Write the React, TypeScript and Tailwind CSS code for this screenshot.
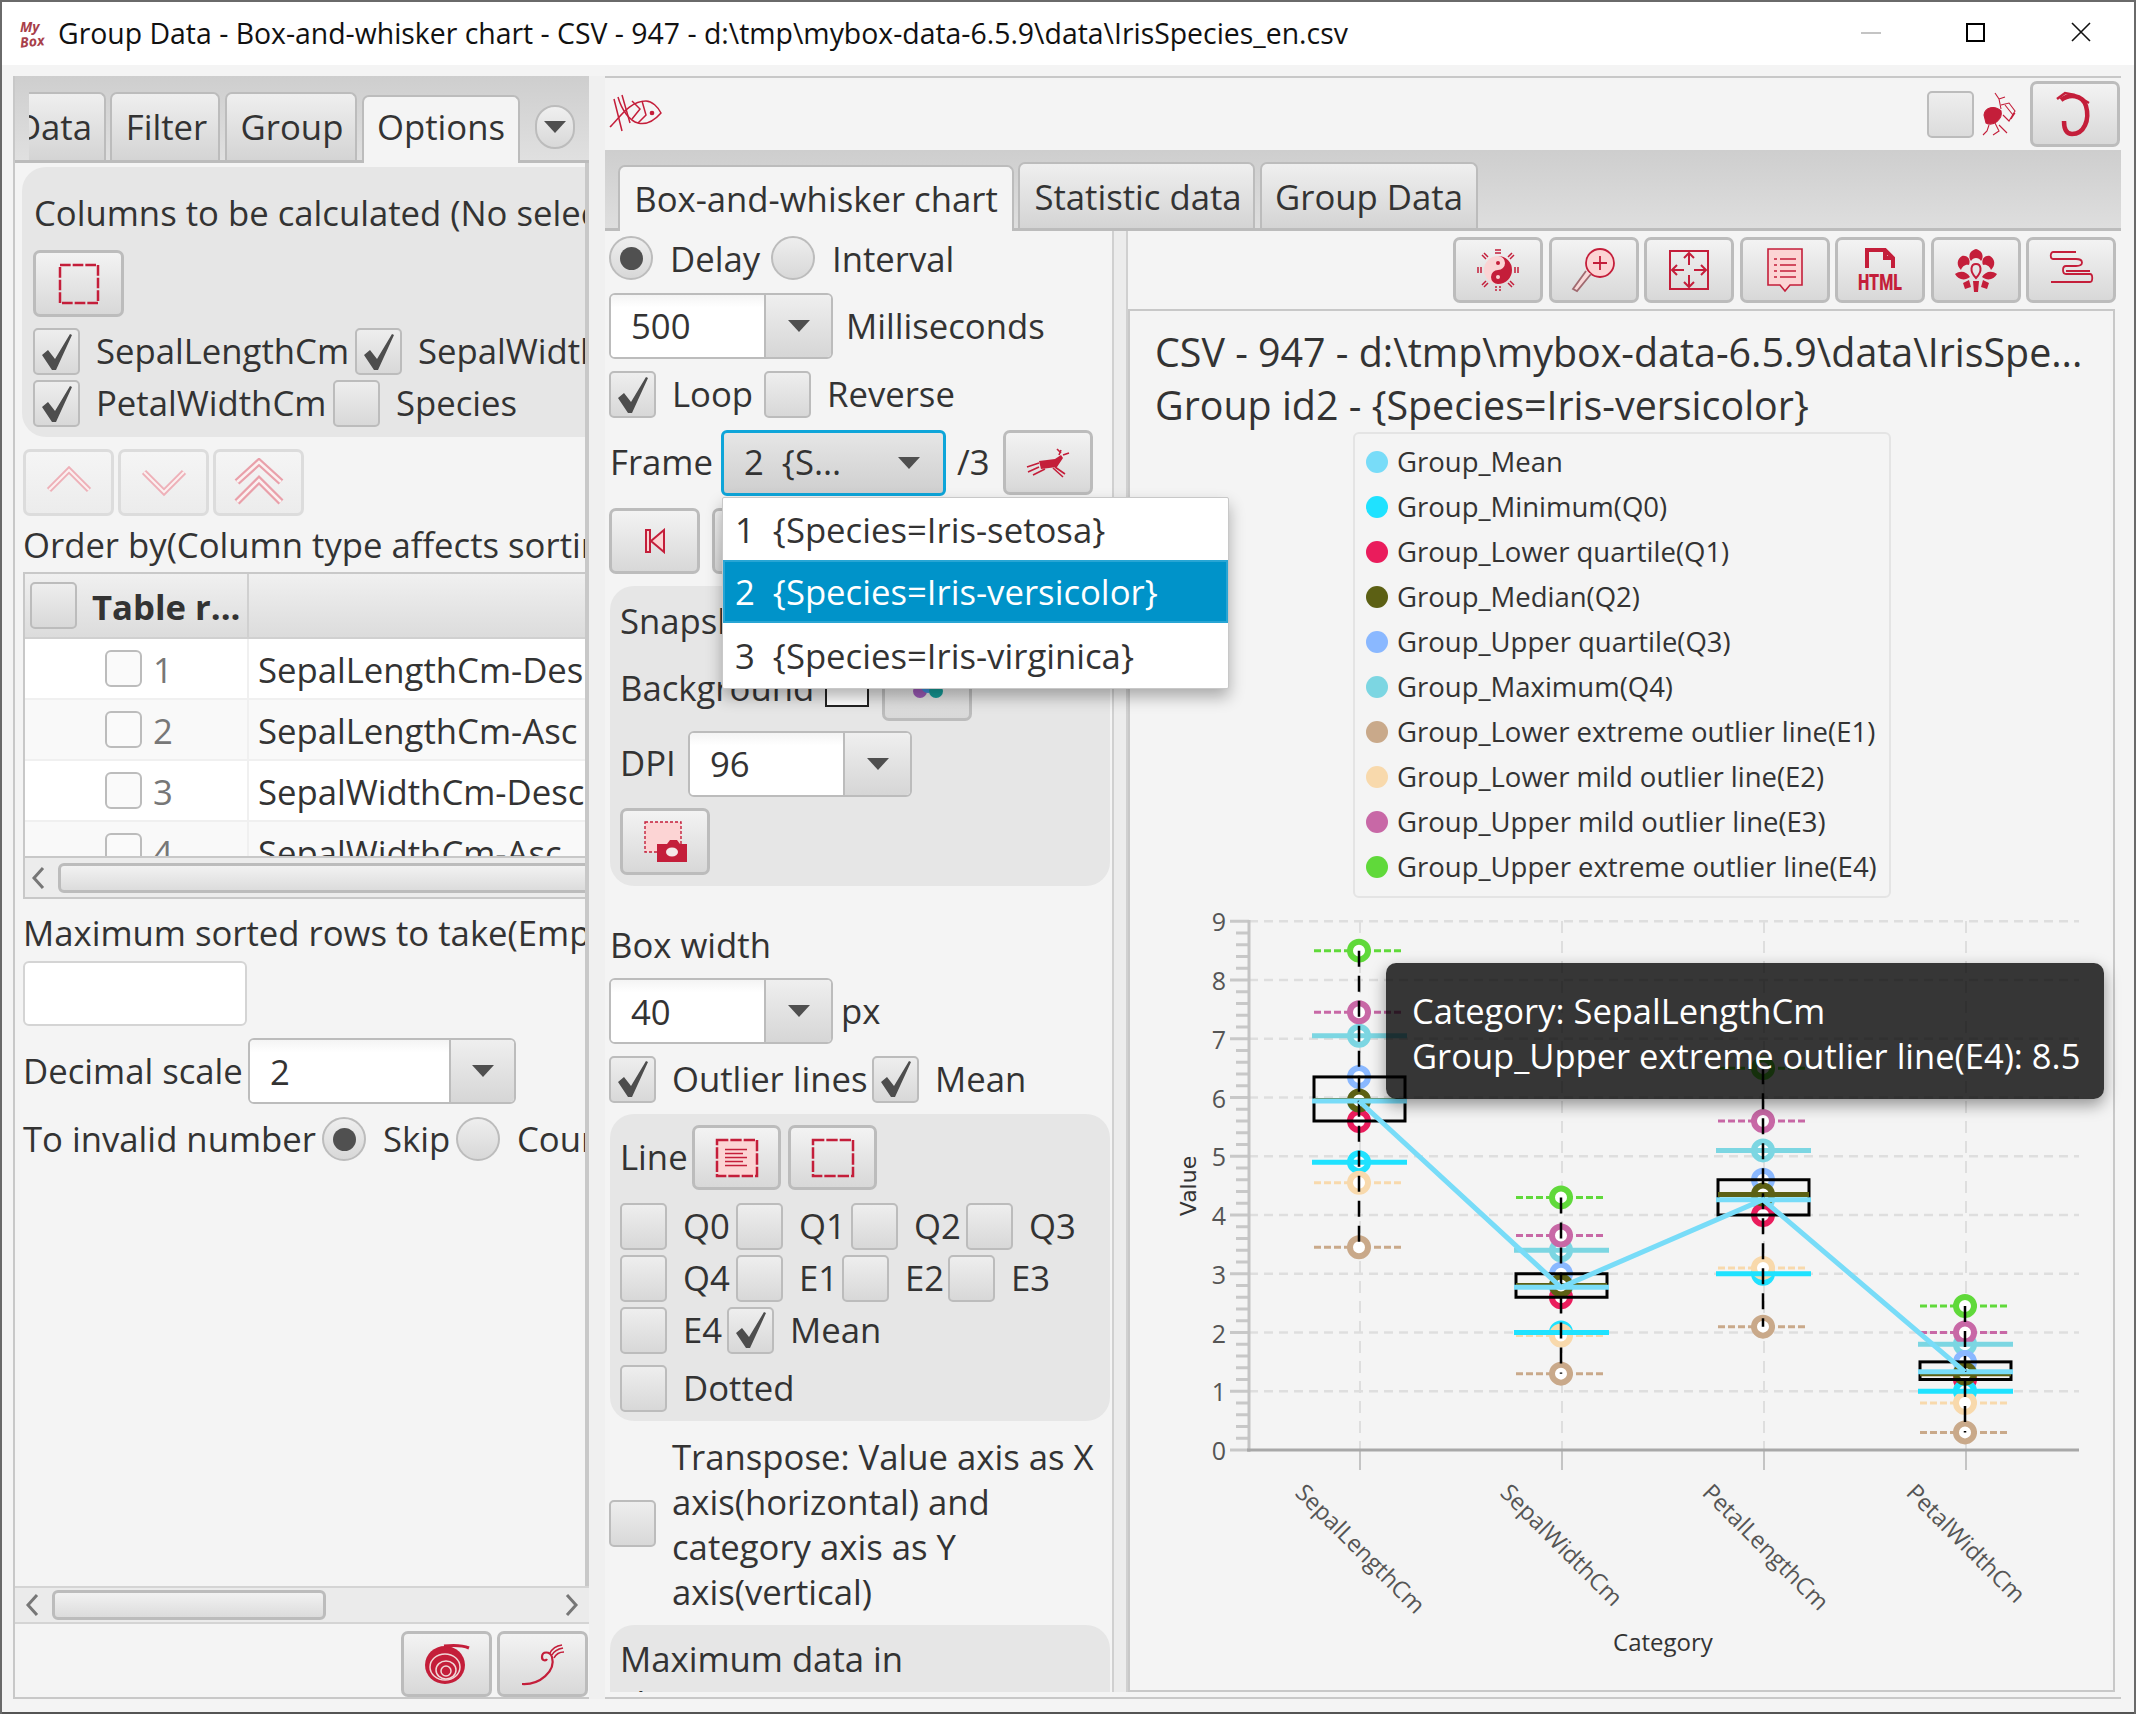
import React from 'react';

const RED = '#c41e3a';
const PINK = '#fcd4d4';

const DashedRect = ({ w = 38, h = 38, fill = 'none', lines = false }: { w?: number; h?: number; fill?: string; lines?: boolean }) => (
    <svg width={w + 4} height={h + 4} viewBox={`0 0 ${w + 4} ${h + 4}`}>
        <rect x="2" y="2" width={w} height={h} fill={fill} stroke={RED} strokeWidth="2.5" strokeDasharray={`${w / 3 - 2} 2`} />
        {lines && [0, 1, 2, 3, 4].map(i => (
            <line key={i} x1={w * 0.25} x2={i % 2 ? w * 0.7 : w * 0.8} y1={h * 0.32 + i * 4} y2={h * 0.32 + i * 4} stroke={RED} strokeWidth="1.5" />
        ))}
    </svg>
);

const Chevrons = ({ kind }: { kind: 'up' | 'down' | 'top' }) => (
    <svg width="50" height="50" viewBox="0 0 50 50" fill="none" strokeLinejoin="miter">
        {kind === 'up' && <><polyline points="5,32 25,12 45,32" stroke="#eeb0b8" strokeWidth="6" /><polyline points="5,32 25,12 45,32" stroke="#fbf0f0" strokeWidth="2" /></>}
        {kind === 'down' && <><polyline points="5,14 25,34 45,14" stroke="#eeb0b8" strokeWidth="6" /><polyline points="5,14 25,34 45,14" stroke="#fbf0f0" strokeWidth="2" /></>}
        {kind === 'top' && <>
            <polyline points="3,24 25,4 47,24" stroke="#e9a0aa" strokeWidth="7" /><polyline points="3,24 25,4 47,24" stroke="#fbf0f0" strokeWidth="2.5" />
            <polyline points="3,44 25,22 47,44" stroke="#e9a0aa" strokeWidth="7" /><polyline points="3,44 25,22 47,44" stroke="#fbf0f0" strokeWidth="2.5" />
        </>}
    </svg>
);

const Fish = () => (
    <svg width="54" height="42" viewBox="0 0 54 42" fill="none" stroke={RED} strokeWidth="1.5">
        <path d="M2 34 C12 24 22 8 38 8 C44 8 50 14 53 20 C46 28 38 32 30 30 C22 28 14 18 10 4" />
        <path d="M6 6 L14 38 M14 2 L22 30 M24 8 L32 16 L24 26 M34 8 L38 22 L30 30" />
        <circle cx="44" cy="20" r="1.6" fill={RED} />
    </svg>
);

const Deer = () => (
    <svg width="46" height="32" viewBox="0 0 46 32" fill="none" stroke={RED}>
        <path d="M14 14 L30 12 L36 8 L38 11 L32 20 L16 22 Z" fill={RED} stroke="none" />
        <path d="M34 8 L36 3 M38 8 L44 6 M36 6 L32 2 M14 16 L2 20 M14 20 L3 25 M20 22 L8 28 M30 20 L40 27 M28 21 L38 30" strokeWidth="1.6" />
    </svg>
);

const Bird = () => (
    <svg width="38" height="46" viewBox="0 0 38 46" fill="none" stroke={RED} strokeWidth="1.1">
        <path d="M5 24 C6 16 16 14 22 20 C24 28 14 36 7 32 Z" fill={RED} />
        <path d="M16 2 L20 8 L22 18 M20 8 L26 6 M22 14 L30 12 L36 20 L30 30 L24 24 M36 22 L32 28 M26 14 L34 24 M10 34 L8 40 L4 44 M16 32 L20 40 L14 44 M20 34 L28 42" />
    </svg>
);

const Dragon = () => (
    <svg width="40" height="46" viewBox="0 0 40 46" fill="none" stroke={RED} strokeWidth="4.5">
        <path d="M6 9 C14 3 27 3 31 15 C35 29 29 43 17 43 C11 43 9 38 9 30" />
        <path d="M2 8 L10 2 L20 4 M24 6 L34 12" strokeWidth="2.5" />
    </svg>
);

const Snail = () => (
    <svg width="46" height="42" viewBox="0 0 46 42">
        <ellipse cx="21" cy="22" rx="20" ry="19" fill={RED} />
        <path d="M20 3 C30 2 38 2 45 5" fill="none" stroke={RED} strokeWidth="3" />
        <g fill="none" stroke="#f0d8d8" strokeWidth="1.5">
            <ellipse cx="21" cy="24" rx="15" ry="13" />
            <ellipse cx="22" cy="27" rx="10" ry="9" />
            <ellipse cx="22" cy="28" rx="5" ry="5" />
        </g>
    </svg>
);

const Sprout = () => (
    <svg width="46" height="46" viewBox="0 0 46 46" fill="none" stroke={RED}>
        <path d="M2 43 C20 44 36 30 32 16 C30 10 22 10 22 16 C22 20 26 20 27 18" strokeWidth="2.2" />
        <path d="M30 12 C32 8 36 5 42 4 M32 14 C34 10 38 8 43 7 M34 17 C36 13 40 11 44 11" strokeWidth="1.6" />
    </svg>
);

const Taiji = () => (
    <svg width="46" height="46" viewBox="0 0 46 46">
        <circle cx="23" cy="23" r="14" fill="#fad4d4" />
        <path d="M23 9 A14 14 0 0 1 23 37 A7 7 0 0 1 23 23 A7 7 0 0 0 23 9 Z" fill={RED} />
        <circle cx="23" cy="16" r="2" fill={RED} />
        <circle cx="23" cy="30" r="2" fill="#fad4d4" />
        <g stroke={RED} strokeWidth="1.5">
            <path d="M20 3 H26 M20 6 H26 M20 40 H22 M24 40 H26 M20 43 H22 M24 43 H26 M3 20 V26 M6 20 V26 M40 20 V26 M43 20 V26 M7 8 L11 12 M9 6 L13 10 M35 12 L39 8 M33 10 L37 6 M7 38 L11 34 M9 40 L13 36 M35 34 L39 38 M33 36 L37 40" />
        </g>
    </svg>
);

const Magnifier = () => (
    <svg width="46" height="46" viewBox="0 0 46 46" fill="none" stroke={RED} strokeWidth="1.8">
        <circle cx="29" cy="16" r="14" fill={PINK} />
        <path d="M29 9 V23 M22 16 H36" />
        <path d="M20 27 L6 44 L2 42 L15 24" fill="#f8d8d8" stroke="#a06a70" />
    </svg>
);

const MoveBox = () => (
    <svg width="42" height="42" viewBox="0 0 42 42" fill="none" stroke={RED} strokeWidth="2">
        <rect x="2" y="2" width="38" height="38" />
        <path d="M21 4 V16 M16 9 L21 4 L26 9 M21 26 V38 M16 33 L21 38 L26 33 M4 21 H16 M9 16 L4 21 L9 26 M26 21 H38 M33 16 L38 21 L33 26" />
    </svg>
);

const NoteIcon = () => (
    <svg width="38" height="46" viewBox="0 0 38 46" fill={PINK} stroke={RED} strokeWidth="1.6">
        <path d="M2 2 H36 V38 H24 L19 44 L14 38 H2 Z" />
        <path d="M14 12 H30 M14 18 H30 M14 24 H30 M14 30 H30 M8 12 H11 M8 18 H11 M8 24 H11 M8 30 H11" />
    </svg>
);

const HtmlIcon = () => (
    <svg width="46" height="46" viewBox="0 0 46 46">
        <path d="M10 21 V3 H28 L36 11 V21 M28 3 V11 H36" fill="none" stroke={RED} strokeWidth="4" />
        <text x="23" y="43" textAnchor="middle" fontFamily="Roboto, sans-serif" fontWeight="900" fontSize="22" fill={RED} textLength="44" lengthAdjust="spacingAndGlyphs">HTML</text>
    </svg>
);

const Flower = () => (
    <svg width="46" height="46" viewBox="0 0 46 46" fill={RED}>
        <path d="M23 2 C30 4 31 10 28 14 C26 10 20 10 18 14 C15 10 16 4 23 2 Z" />
        <path d="M9 9 C15 8 18 13 16 18 C12 17 9 20 8 23 C3 18 4 12 9 9 Z M37 9 C31 8 28 13 30 18 C34 17 37 20 38 23 C43 18 42 12 37 9 Z" />
        <path d="M2 27 C8 23 14 25 17 30 C12 34 5 33 2 27 Z M44 27 C38 23 32 25 29 30 C34 34 41 33 44 27 Z" />
        <path d="M23 17 C28 17 30 24 23 31 C16 24 18 17 23 17 Z" fill="none" stroke={RED} strokeWidth="2" />
        <path d="M10 36 L16 33 L18 40 L12 42 Z M36 36 L30 33 L28 40 L34 42 Z M20 34 H26 L25 45 H21 Z" />
    </svg>
);

const ScrollIcon = () => (
    <svg width="46" height="40" viewBox="0 0 46 40" fill="none" stroke={RED} strokeWidth="1.8">
        <path d="M5 2 H28 M5 2 C2 2 2 9 5 9 H28 C36 9 36 16 28 16 H18 M18 16 C14 16 14 24 18 24 H42 C45 24 45 32 42 32 M3 32 H42 M18 21 H42" />
    </svg>
);

const FirstIcon = () => (
    <svg width="22" height="26" viewBox="0 0 22 26" fill={PINK} stroke={RED} strokeWidth="2">
        <path d="M2 2 H6 V24 H2 Z M20 2 V24 L7 13 Z" />
    </svg>
);

const SnapIcon = () => (
    <svg width="44" height="44" viewBox="0 0 44 44">
        <rect x="2" y="2" width="36" height="30" fill={PINK} stroke={RED} strokeWidth="1.4" strokeDasharray="3 2" />
        <path d="M14 24 H24 L27 20 H34 L37 24 H44 V42 H14 Z" fill={RED} />
        <ellipse cx="29" cy="32" rx="6" ry="4.5" fill="#f4e8e8" />
    </svg>
);

const Palette = () => (
    <svg width="34" height="24" viewBox="0 0 34 24">
        <circle cx="10" cy="15" r="7" fill="#9b59b6" />
        <circle cx="18" cy="10" r="7" fill="#3b8fd8" />
        <circle cx="26" cy="15" r="7" fill="#149a96" />
    </svg>
);

const Arrow = () => (
    <svg width="24" height="14" viewBox="0 0 24 14"><path d="M1 1 H23 L12 13 Z" fill="#4f4f4f" /></svg>
);

const CheckMark = () => (
    <svg width="34" height="38" viewBox="0 0 34 38" className="block">
        <path d="M2 22 L8 17 L15 26 L30 1 L32 2 L16 37 L12 37 Z" fill="#4d4d4d" />
    </svg>
);

const Check = ({ on = false }: { on?: boolean }) => (
    <div className="flex h-[47px] w-[47px] shrink-0 items-center justify-center rounded-[5px] border-2 border-[#bcbcbc] bg-linear-to-b from-[#eeeeee] to-[#d8d8d8]">
        {on && <CheckMark />}
    </div>
);

const Radio = ({ on = false }: { on?: boolean }) => (
    <div className="flex h-[44px] w-[44px] shrink-0 items-center justify-center rounded-full border-2 border-[#bcbcbc] bg-linear-to-b from-[#eeeeee] to-[#d8d8d8]">
        {on && <div className="h-[23px] w-[23px] rounded-full bg-[#505050]" />}
    </div>
);

const Combo = ({ text, className = 'w-[224px]', inner = 'w-[155px]' }: { text: string; className?: string; inner?: string }) => (
    <div className={`flex h-[66px] shrink-0 overflow-hidden rounded-[6px] border-2 border-[#bcbcbc] bg-white ${className}`}>
        <div className={`flex items-center pl-[20px] pt-[2px] ${inner} border-r-2 border-[#bcbcbc] bg-linear-to-b from-[#f4f4f4] to-white to-[20%]`}>{text}</div>
        <div className="flex flex-1 items-center justify-center bg-linear-to-b from-[#efefef] to-[#d6d6d6]"><Arrow /></div>
    </div>
);

const Btn = ({ children, className = 'w-[91px] h-[66px]', off = false }: { children?: React.ReactNode; className?: string; off?: boolean }) => (
    <div className={`flex shrink-0 items-center justify-center rounded-[7px] border-[3px] ${off ? 'border-[#dcdcdc] from-[#f5f5f5] to-[#ececec]' : 'border-[#bcbcbc] from-[#f3f3f3] to-[#d8d8d8]'} bg-linear-to-b ${className}`}>
        {children}
    </div>
);

const Labeled = ({ label, on, className = '' }: { label: string; on?: boolean; className?: string }) => (
    <div className={`flex shrink-0 items-center ${className}`}>
        <Check on={on} />
        <span className="ml-[16px] whitespace-nowrap">{label}</span>
    </div>
);

const Tab = ({ label, active = false, className = '' }: { label: string; active?: boolean; className?: string }) => (
    <div className={`flex shrink-0 items-center justify-center whitespace-nowrap rounded-t-[7px] border-2 border-b-0 border-[#bcbcbc] ${active ? 'relative z-10 -mb-[3px] bg-[#f4f4f4]' : 'bg-linear-to-b from-[#efefef] to-[#d4d4d4]'} ${className}`}>
        {label}
    </div>
);

const ScrollArrow = ({ left = false }: { left?: boolean }) => (
    <svg width="14" height="24" viewBox="0 0 14 24" fill="none" stroke="#777" strokeWidth="3">
        <polyline points={left ? '12,2 3,12 12,22' : '2,2 11,12 2,22'} />
    </svg>
);

const TableRow = ({ n, text, odd }: { n: number; text: string; odd: boolean }) => (
    <div className={`flex h-[61px] shrink-0 border-b-2 border-[#f0f0f0] ${odd ? 'bg-white' : 'bg-[#f9f9f9]'}`}>
        <div className="flex w-[224px] shrink-0 items-center border-r-2 border-[#f0f0f0] pl-[80px] text-[#777]">
            <div className="h-[37px] w-[37px] rounded-[6px] border-2 border-[#bcbcbc] bg-[#fafafa]" />
            <span className="ml-[11px] pt-[3px]">{n}</span>
        </div>
        <div className="flex items-center whitespace-nowrap pl-[9px] pt-[3px]">{text}</div>
    </div>
);

const LeftPanel = () => (
    <div className="flex h-[1623px] w-[576px] shrink-0 flex-col border-b-2 border-l-2 border-[#c8c8c8]">
        <div className="relative flex h-[87px] shrink-0 items-end border-b-[3px] border-[#bcbcbc] bg-linear-to-b from-[#cecece] to-[#e0e0e0] pl-[14px]">
            <div className="flex h-[68px] w-[77px] shrink-0 items-center justify-end overflow-hidden rounded-tr-[7px] border-2 border-b-0 border-l-0 border-[#bcbcbc] bg-linear-to-b from-[#efefef] to-[#d4d4d4] pr-[12px]">Data</div>
            <Tab label="Filter" className="ml-[4px] h-[68px] w-[110px] pl-[3px]" />
            <Tab label="Group" className="ml-[5px] h-[68px] w-[132px] pl-[2px]" />
            <Tab label="Options" active className="ml-[5px] h-[68px] w-[158px] pb-[5px]" />
            <div className="ml-[15px] mb-[11px] flex h-[44px] w-[40px] items-center justify-center rounded-full border-2 border-[#bcbcbc] bg-linear-to-b from-[#f0f0f0] to-[#d8d8d8]"><Arrow /></div>
        </div>
        <div className="flex h-[1423px] shrink-0 flex-col overflow-hidden border-r-4 border-[#c8c8c8]">
            <div className="ml-[7px] mt-[4px] h-[270px] w-[700px] shrink-0 overflow-hidden rounded-[24px] bg-[#e6e6e6] pl-[11px] pt-[23px]">
                <div className="ml-[1px] h-[45px] whitespace-nowrap leading-[45px]">Columns to be calculated (No selection is same as all selected)</div>
                <Btn className="mt-[15px] h-[67px] w-[91px]"><DashedRect /></Btn>
                <div className="mt-[11px] flex h-[47px]">
                    <Labeled label="SepalLengthCm" on className="w-[322px]" />
                    <Labeled label="SepalWidthCm" on />
                </div>
                <div className="mt-[5px] flex h-[47px]">
                    <Labeled label="PetalWidthCm" on className="w-[300px]" />
                    <Labeled label="Species" />
                </div>
            </div>
            <div className="ml-[8px] mt-[12px] flex h-[67px] shrink-0 gap-[4px]">
                <Btn off className="h-[67px] w-[91px]"><Chevrons kind="up" /></Btn>
                <Btn off className="h-[67px] w-[91px]"><Chevrons kind="down" /></Btn>
                <Btn off className="h-[67px] w-[91px]"><Chevrons kind="top" /></Btn>
            </div>
            <div className="ml-[8px] mt-[6px] h-[45px] shrink-0 whitespace-nowrap leading-[45px]">Order by(Column type affects sorting results)</div>
            <div className="ml-[8px] mt-[5px] flex h-[327px] w-[700px] shrink-0 flex-col border-2 border-[#c8c8c8]">
                <div className="flex h-[65px] shrink-0 border-b-2 border-[#d0d0d0] bg-linear-to-b from-[#f0f0f0] to-[#dcdcdc]">
                    <div className="flex w-[224px] shrink-0 items-center border-r-2 border-[#d0d0d0] pl-[5px]">
                        <Check />
                        <span className="ml-[15px] whitespace-nowrap pt-[4px] font-bold">Table r...</span>
                    </div>
                </div>
                <div className="flex h-[217px] shrink-0 flex-col overflow-hidden">
                    <TableRow n={1} text="SepalLengthCm-Desc" odd />
                    <TableRow n={2} text="SepalLengthCm-Asc" odd={false} />
                    <TableRow n={3} text="SepalWidthCm-Desc" odd />
                    <TableRow n={4} text="SepalWidthCm-Asc" odd={false} />
                </div>
                <div className="flex h-[41px] shrink-0 items-center border-t-2 border-[#c8c8c8] bg-[#ececec] pl-[6px]">
                    <ScrollArrow left />
                    <div className="ml-[13px] h-[30px] flex-1 rounded-[6px] border-[3px] border-[#bcbcbc] bg-linear-to-b from-[#f2f2f2] to-[#dcdcdc]" />
                </div>
            </div>
            <div className="ml-[8px] mt-[11px] h-[45px] shrink-0 whitespace-nowrap leading-[45px]">Maximum sorted rows to take(Empty to take all)</div>
            <div className="ml-[8px] mt-[6px] h-[65px] w-[224px] shrink-0 rounded-[6px] border-2 border-[#d4d4d4] bg-white" />
            <div className="ml-[8px] mt-[12px] flex h-[66px] shrink-0 items-center">
                <span className="w-[225px] shrink-0 whitespace-nowrap">Decimal scale</span>
                <Combo text="2" className="w-[268px]" inner="w-[201px]" />
            </div>
            <div className="ml-[8px] mt-[13px] flex h-[44px] shrink-0 items-center whitespace-nowrap">
                <span className="w-[299px] shrink-0">To invalid number</span>
                <Radio on />
                <span className="ml-[17px] w-[73px] shrink-0">Skip</span>
                <Radio />
                <span className="ml-[17px]">Count as zero</span>
            </div>
        </div>
        <div className="flex h-[38px] shrink-0 items-center justify-between border-y-2 border-[#d4d4d4] bg-[#ebebeb] px-[10px]">
            <ScrollArrow left />
            <div className="ml-[13px] mr-auto h-[30px] w-[274px] rounded-[6px] border-[3px] border-[#bcbcbc] bg-linear-to-b from-[#f2f2f2] to-[#dcdcdc]" />
            <ScrollArrow />
        </div>
        <div className="flex flex-1 items-start justify-end gap-[5px] pr-[1px] pt-[7px]">
            <Btn><Snail /></Btn>
            <Btn><Sprout /></Btn>
        </div>
    </div>
);

const Middle = () => (
    <div className="h-[1461px] w-[507px] shrink-0 overflow-hidden pl-[4px]">
        <div className="mt-[5px] flex h-[44px] items-center">
            <Radio on />
            <span className="ml-[17px] w-[101px] shrink-0 pt-[2px]">Delay</span>
            <Radio />
            <span className="ml-[17px] pt-[2px]">Interval</span>
        </div>
        <div className="mt-[12px] flex h-[67px] items-center">
            <Combo text="500" />
            <span className="ml-[13px] pt-[2px]">Milliseconds</span>
        </div>
        <div className="mt-[12px] flex h-[47px]">
            <Labeled label="Loop" on className="w-[155px]" />
            <Labeled label="Reverse" />
        </div>
        <div className="mt-[12px] flex h-[65px] items-center">
            <span className="ml-[1px] w-[111px] shrink-0">Frame</span>
            <div className="flex h-[66px] w-[225px] shrink-0 items-center rounded-[6px] border-[3px] border-[#0ea5d9] bg-linear-to-b from-[#e6e6e6] to-[#cfcfcf] pl-[20px] pr-[22px]">
                <span className="whitespace-pre">2  {'{'}S...</span>
                <span className="ml-auto"><Arrow /></span>
            </div>
            <span className="ml-[11px] w-[46px] shrink-0">/3</span>
            <Btn className="h-[65px] w-[90px]"><Deer /></Btn>
        </div>
        <div className="mt-[13px] flex h-[66px] gap-[12px]">
            <Btn><FirstIcon /></Btn>
            <Btn />
        </div>
        <div className="ml-[1px] mt-[12px] h-[300px] w-[500px] rounded-[24px] bg-[#e6e6e6] pl-[10px]">
            <div className="pt-[12px]"><div className="h-[45px] leading-[45px]">Snapshot</div></div>
            <div className="mt-[22px] flex h-[45px] items-center">
                <span className="w-[205px] shrink-0 leading-[45px]">Background</span>
                <div className="h-[38px] w-[44px] shrink-0 border-2 border-[#222] bg-white" />
                <Btn className="ml-[13px] h-[66px] w-[90px]"><Palette /></Btn>
            </div>
            <div className="mt-[20px] flex h-[67px] items-center">
                <span className="w-[68px] shrink-0">DPI</span>
                <Combo text="96" />
            </div>
            <Btn className="mt-[11px] h-[67px] w-[90px]"><SnapIcon /></Btn>
        </div>
        <div className="ml-[1px] mt-[36px] h-[45px] leading-[45px]">Box width</div>
        <div className="mt-[11px] flex h-[66px] items-center">
            <Combo text="40" />
            <span className="ml-[8px]">px</span>
        </div>
        <div className="mt-[12px] flex h-[46px]">
            <Labeled label="Outlier lines" on className="w-[263px]" />
            <Labeled label="Mean" on />
        </div>
        <div className="ml-[1px] mt-[12px] h-[307px] w-[500px] rounded-[24px] bg-[#e6e6e6] pl-[10px]">
            <div className="pt-[11px]">
                <div className="flex h-[65px] items-center gap-[7px]">
                    <span className="w-[65px] shrink-0">Line</span>
                    <Btn className="h-[65px] w-[89px]"><DashedRect w={40} h={36} fill={PINK} lines /></Btn>
                    <Btn className="h-[65px] w-[89px]"><DashedRect w={40} h={36} /></Btn>
                </div>
            </div>
            <div className="mt-[13px] flex h-[46px]">
                <Labeled label="Q0" className="w-[116px]" />
                <Labeled label="Q1" className="w-[115px]" />
                <Labeled label="Q2" className="w-[115px]" />
                <Labeled label="Q3" />
            </div>
            <div className="mt-[6px] flex h-[46px]">
                <Labeled label="Q4" className="w-[116px]" />
                <Labeled label="E1" className="w-[106px]" />
                <Labeled label="E2" className="w-[106px]" />
                <Labeled label="E3" />
            </div>
            <div className="mt-[6px] flex h-[46px]">
                <Labeled label="E4" className="w-[107px]" />
                <Labeled label="Mean" on />
            </div>
            <div className="mt-[12px] flex h-[46px]">
                <Labeled label="Dotted" />
            </div>
        </div>
        <div className="mt-[13px] flex h-[179px] items-center">
            <Check />
            <div className="ml-[16px] w-[440px] leading-[45px]">Transpose: Value axis as X<br />axis(horizontal) and<br />category axis as Y<br />axis(vertical)</div>
        </div>
        <div className="ml-[1px] mt-[12px] h-[120px] w-[500px] rounded-[24px] bg-[#e6e6e6] pl-[10px] pt-[11px] leading-[45px] whitespace-nowrap">
            Maximum data in<br />chart(Empty/zero/negative
        </div>
    </div>
);

const COLORS = {
    mean: '#78dcf8', q0: '#1fe2ff', q1: '#ea1c5c', q2: '#5c6014', q3: '#8ab8ff',
    q4: '#7cd6e2', e1: '#c9a98a', e2: '#f8d9ac', e3: '#c868a6', e4: '#60d93a',
};

const LEGEND: [string, string][] = [
    ['Group_Mean', COLORS.mean],
    ['Group_Minimum(Q0)', COLORS.q0],
    ['Group_Lower quartile(Q1)', COLORS.q1],
    ['Group_Median(Q2)', COLORS.q2],
    ['Group_Upper quartile(Q3)', COLORS.q3],
    ['Group_Maximum(Q4)', COLORS.q4],
    ['Group_Lower extreme outlier line(E1)', COLORS.e1],
    ['Group_Lower mild outlier line(E2)', COLORS.e2],
    ['Group_Upper mild outlier line(E3)', COLORS.e3],
    ['Group_Upper extreme outlier line(E4)', COLORS.e4],
];

const DATA = [
    { x: 1360, name: 'SepalLengthCm', e4: 8.5, e3: 7.45, q4: 7.05, q3: 6.35, q2: 5.95, mean: 5.94, q1: 5.6, q0: 4.9, e2: 4.55, e1: 3.45, lx: 1294 },
    { x: 1562, name: 'SepalWidthCm', e4: 4.3, e3: 3.65, q4: 3.4, q3: 3.0, q2: 2.8, mean: 2.77, q1: 2.6, q0: 2.0, e2: 1.95, e1: 1.3, lx: 1499 },
    { x: 1764, name: 'PetalLengthCm', e4: 6.5, e3: 5.6, q4: 5.1, q3: 4.6, q2: 4.35, mean: 4.26, q1: 4.0, q0: 3.0, e2: 3.1, e1: 2.1, lx: 1701 },
    { x: 1966, name: 'PetalWidthCm', e4: 2.45, e3: 2.0, q4: 1.8, q3: 1.5, q2: 1.3, mean: 1.33, q1: 1.2, q0: 1.0, e2: 0.8, e1: 0.3, lx: 1905 },
];

const vy = (v: number) => 1450 - 58.75 * v;

const Chart = () => (
    <svg width="983" height="790" viewBox="1130 900 983 790" fontFamily="'Open Sans', sans-serif" className="block">
        {[1, 2, 3, 4, 5, 6, 7, 8, 9].map(v => (
            <line key={v} x1="1249" x2="2079" y1={vy(v)} y2={vy(v)} stroke="#dedede" strokeWidth="2.5" strokeDasharray="9 6" />
        ))}
        {DATA.map(d => (
            <g key={d.x}>
                <line x1={d.x} x2={d.x} y1={921} y2={1450} stroke="#dedede" strokeWidth="2" strokeDasharray="12 8" />
                <line x1={d.x} x2={d.x} y1={1450} y2={1470} stroke="#c4c4c4" strokeWidth="2" />
            </g>
        ))}
        {Array.from({ length: 46 }, (_, i) => i / 5).map(v => (
            <line key={v} x1={Number.isInteger(v) ? 1230 : 1236} x2="1249" y1={vy(v)} y2={vy(v)} stroke="#c8c8c8" strokeWidth="3" />
        ))}
        <line x1="1249" x2="1249" y1="920" y2="1452" stroke="#c4c4c4" strokeWidth="3" />
        <line x1="1247" x2="2079" y1="1450" y2="1450" stroke="#a8a8a8" strokeWidth="3" />
        {[0, 1, 2, 3, 4, 5, 6, 7, 8, 9].map(v => (
            <text key={v} x="1226" y={vy(v) + 10} textAnchor="end" fontSize="25" fill="#555">{v}</text>
        ))}
        <text transform="translate(1196 1186) rotate(-90)" textAnchor="middle" fontSize="22" fill="#333" fontFamily="'DejaVu Sans', sans-serif">Value</text>
        <text x="1663" y="1651" textAnchor="middle" fontSize="24" fill="#333">Category</text>
        {DATA.map(d => (
            <text key={d.name} transform={`translate(${d.lx} 1494) rotate(45)`} fontSize="23.5" fill="#555">{d.name}</text>
        ))}
        {DATA.map(d => (
            <g key={d.name + 'box'} fill="none">
                {(['e1', 'e2', 'e3', 'e4'] as const).map(k => (
                    <line key={k} x1={d.x - 46} x2={d.x + 44} y1={vy(d[k])} y2={vy(d[k])} stroke={COLORS[k]} strokeWidth="3" strokeDasharray="7 3" />
                ))}
                {(['mean', 'q1', 'q0', 'q4', 'q3', 'q2', 'e1', 'e2', 'e3', 'e4'] as const).map(k => (
                    <circle key={k} cx={d.x - 1} cy={vy(d[k])} r="9" fill="white" stroke={COLORS[k]} strokeWidth="6" />
                ))}
                <rect x={d.x - 46} y={vy(d.q3)} width="91" height={vy(d.q1) - vy(d.q3)} stroke="black" strokeWidth="3" />
                <line x1={d.x - 46} x2={d.x + 45} y1={vy(d.q2)} y2={vy(d.q2)} stroke={COLORS.q2} strokeWidth="5" />
                <line x1={d.x - 48} x2={d.x + 47} y1={vy(d.q0)} y2={vy(d.q0)} stroke={COLORS.q0} strokeWidth="5" />
                <line x1={d.x - 48} x2={d.x + 47} y1={vy(d.q4)} y2={vy(d.q4)} stroke={COLORS.q4} strokeWidth="5" />
                <line x1={d.x - 48} x2={d.x + 47} y1={vy(d.mean)} y2={vy(d.mean)} stroke={COLORS.mean} strokeWidth="5" />
                <line x1={d.x - 1} x2={d.x - 1} y1={vy(d.e4)} y2={vy(d.e1)} stroke="black" strokeWidth="2.5" strokeDasharray="16 9" />
            </g>
        ))}
        <polyline points={DATA.map(d => `${d.x - 1},${vy(d.mean)}`).join(' ')} fill="none" stroke={COLORS.mean} strokeWidth="5" />
    </svg>
);

const ChartPane = () => (
    <div className="flex h-[1466px] w-[993px] shrink-0 flex-col">
        <div className="flex h-[78px] shrink-0 items-center justify-end gap-[5.5px] pr-[5px]">
            <Btn className="h-[66px] w-[90px]"><Taiji /></Btn>
            <Btn className="h-[66px] w-[90px]"><Magnifier /></Btn>
            <Btn className="h-[66px] w-[90px]"><MoveBox /></Btn>
            <Btn className="h-[66px] w-[90px]"><NoteIcon /></Btn>
            <Btn className="h-[66px] w-[90px]"><HtmlIcon /></Btn>
            <Btn className="h-[66px] w-[90px]"><Flower /></Btn>
            <Btn className="h-[66px] w-[90px]"><ScrollIcon /></Btn>
        </div>
        <div className="h-[1383px] w-[987px] shrink-0 overflow-hidden border-2 border-[#c8c8c8]">
            <div className="ml-[25px] mt-[15px] whitespace-nowrap text-[39.4px] leading-[53px]">
                <div>CSV - 947 - d:\tmp\mybox-data-6.5.9\data\IrisSpe...</div>
                <div>Group id2 - {'{'}Species=Iris-versicolor{'}'}</div>
            </div>
            <div className="ml-[223px] h-[466px] w-[538px] rounded-[6px] border-2 border-[#e4e4e4] pl-[11px] pt-[5px] text-[27.5px]">
                {LEGEND.map(([label, color]) => (
                    <div key={label} className="flex h-[45px] items-center whitespace-nowrap">
                        <span className="h-[22px] w-[22px] shrink-0 rounded-full" style={{ backgroundColor: color }} />
                        <span className="ml-[9px]">{label}</span>
                    </div>
                ))}
            </div>
            <div className="h-[2px]" />
            <Chart />
        </div>
    </div>
);

const RightPanel = () => (
    <div className="flex h-[1623px] w-[1516px] shrink-0 flex-col border-y-2 border-[#c8c8c8]">
        <div className="flex h-[72px] shrink-0 items-center pl-[3px] pr-[1px]">
            <Fish />
            <div className="ml-auto"><div className="h-[47px] w-[47px] rounded-[5px] border-2 border-[#bcbcbc] bg-linear-to-b from-[#eeeeee] to-[#dcdcdc]" /></div>
            <div className="ml-[5px]"><Bird /></div>
            <Btn className="ml-[13px] h-[66px] w-[90px]"><Dragon /></Btn>
        </div>
        <div className="flex h-[81px] shrink-0 items-end border-b-[3px] border-[#bcbcbc] bg-linear-to-b from-[#cecece] to-[#dedede] pl-[13px]">
            <Tab label="Box-and-whisker chart" active className="h-[66px] w-[396px] pt-[1px]" />
            <Tab label="Statistic data" className="ml-[4px] h-[66px] w-[237px] pl-[3px] pt-[3px]" />
            <Tab label="Group Data" className="ml-[5px] h-[66px] w-[218px] pt-[3px]" />
        </div>
        <div className="flex flex-1">
            <Middle />
            <div className="h-[1461px] w-[16px] shrink-0 border-x-2 border-[#d0d0d0] bg-[#ececec]" />
            <ChartPane />
        </div>
    </div>
);

export default function App() {
    return (
        <div className="relative h-[1714px] w-[2136px] overflow-hidden border-x-2 border-t-2 border-x-[#6a6a6a] border-t-[#6a6a6a] bg-[#f4f4f4] font-['Open_Sans',sans-serif] text-[34.7px] text-[#333]">
            <div className="flex h-[63px] items-center bg-white text-[28.4px] text-[#111]">
                <div className="ml-[18px] flex w-[34px] flex-col text-[14px] font-bold italic leading-[14px] text-[#a8404a]">
                    <span>My</span>
                    <span className="-rotate-6">Box</span>
                </div>
                <span className="ml-[4px] whitespace-nowrap">Group Data - Box-and-whisker chart - CSV - 947 - d:\tmp\mybox-data-6.5.9\data\IrisSpecies_en.csv</span>
                <div className="ml-auto mb-[2px] mr-[149px] flex items-center gap-[85px]">
                    <div className="h-[2px] w-[20px] bg-[#c4c4c4]" />
                    <div className="h-[19px] w-[19px] border-2 border-black" />
                </div>
            </div>
            <div className="flex h-[1634px] pl-[11px] pt-[11px]">
                <LeftPanel />
                <div className="h-[1623px] w-[16px] shrink-0 bg-[#f0f0f0]" />
                <RightPanel />
            </div>
            <div className="h-[15px] border-b-[2px] border-[#555] bg-[#f4f4f4]" />

            {/* window close glyph */}
            <svg className="absolute left-[2069px] top-[20px]" width="20" height="20" viewBox="0 0 20 20" stroke="#111" strokeWidth="1.6"><path d="M1 1 L19 19 M19 1 L1 19" /></svg>

            {/* open combo popup */}
            <div className="absolute left-[720px] top-[495px] z-20 w-[507px] rounded-[2px] border border-[#c8c8c8] bg-white shadow-[0_8px_16px_rgba(0,0,0,0.3)]">
                <div className="flex h-[62px] items-center whitespace-pre pl-[12px] pt-[2px]">1  {'{'}Species=Iris-setosa{'}'}</div>
                <div className="flex h-[63px] items-center whitespace-pre border-2 border-[#28a5d4] bg-[#0093c9] pl-[10px] pt-[2px] text-white">2  {'{'}Species=Iris-versicolor{'}'}</div>
                <div className="flex h-[65px] items-center whitespace-pre pl-[12px] pt-[2px]">3  {'{'}Species=Iris-virginica{'}'}</div>
            </div>

            {/* chart tooltip, translucent like the JavaFX one */}
            <div className="absolute left-[1384px] top-[961px] z-20 h-[136px] w-[718px] rounded-[10px] bg-black/[0.78] pl-[26px] pt-[25px] text-[34.5px] leading-[45px] text-white shadow-[0_6px_16px_rgba(0,0,0,0.4)]">
                <div className="whitespace-nowrap">Category: SepalLengthCm</div>
                <div className="whitespace-nowrap">Group_Upper extreme outlier line(E4): 8.5</div>
            </div>
        </div>
    );
}
